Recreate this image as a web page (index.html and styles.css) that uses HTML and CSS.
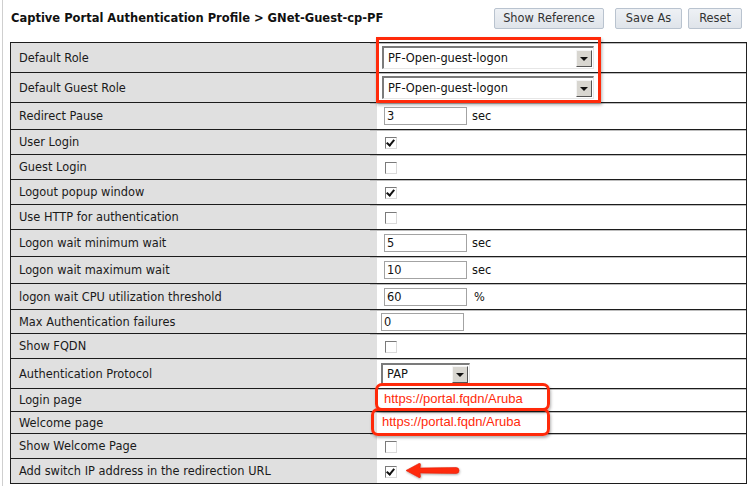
FILE: index.html
```html
<!DOCTYPE html>
<html>
<head>
<meta charset="utf-8">
<link rel="stylesheet" href="styles.css">
</head>
<body>
<div class="page">
  <div class="header">
    <div class="title">Captive Portal Authentication Profile &gt; GNet-Guest-cp-PF</div>
    <div class="buttons">
      <button class="btn btn-ref">Show Reference</button>
      <button class="btn btn-save">Save As</button>
      <button class="btn btn-reset">Reset</button>
    </div>
  </div>
  <div class="sheet">
    <table class="grid">
      <tr class="h30"><td class="lbl">Default Role</td><td class="val"><span class="sel wide"><span class="seltext">PF-Open-guest-logon</span><span class="arrow"></span></span></td></tr>
      <tr class="h30"><td class="lbl">Default Guest Role</td><td class="val"><span class="sel wide"><span class="seltext">PF-Open-guest-logon</span><span class="arrow"></span></span></td></tr>
      <tr class="h27"><td class="lbl">Redirect Pause</td><td class="val"><span class="inp">3</span><span class="unit">sec</span></td></tr>
      <tr class="h25"><td class="lbl">User Login</td><td class="val"><span class="chk on"></span></td></tr>
      <tr class="h25"><td class="lbl">Guest Login</td><td class="val"><span class="chk"></span></td></tr>
      <tr class="h25"><td class="lbl">Logout popup window</td><td class="val"><span class="chk on"></span></td></tr>
      <tr class="h25"><td class="lbl">Use HTTP for authentication</td><td class="val"><span class="chk"></span></td></tr>
      <tr class="h27"><td class="lbl">Logon wait minimum wait</td><td class="val"><span class="inp">5</span><span class="unit">sec</span></td></tr>
      <tr class="h27"><td class="lbl">Logon wait maximum wait</td><td class="val"><span class="inp">10</span><span class="unit">sec</span></td></tr>
      <tr class="h26"><td class="lbl">logon wait CPU utilization threshold</td><td class="val"><span class="inp">60</span><span class="unit pct">%</span></td></tr>
      <tr class="h24"><td class="lbl">Max Authentication failures</td><td class="val tight"><span class="inp">0</span></td></tr>
      <tr class="h25"><td class="lbl">Show FQDN</td><td class="val"><span class="chk"></span></td></tr>
      <tr class="h30"><td class="lbl">Authentication Protocol</td><td class="val tight"><span class="sel pap"><span class="seltext">PAP</span><span class="arrow"></span></span></td></tr>
      <tr class="h23"><td class="lbl">Login page</td><td class="val up3"><span class="url">https://portal.fqdn/Aruba</span></td></tr>
      <tr class="h22"><td class="lbl">Welcome page</td><td class="val up2"><span class="url url2">https://portal.fqdn/Aruba</span></td></tr>
      <tr class="h25"><td class="lbl">Show Welcome Page</td><td class="val"><span class="chk"></span></td></tr>
      <tr class="h25"><td class="lbl">Add switch IP address in the redirection URL</td><td class="val"><span class="chk on"></span></td></tr>
    </table>
    <div class="mark mark-roles"></div>
    <div class="mark-round mark-login"></div>
    <div class="mark-round mark-welcome"></div>
    <svg class="mark-arrow" width="60" height="22" viewBox="0 0 60 22">
      <defs>
        <filter id="sh" x="-20%" y="-40%" width="140%" height="180%">
          <feDropShadow dx="0.5" dy="1" stdDeviation="0.8" flood-color="#000" flood-opacity="0.35"/>
        </filter>
      </defs>
      <path d="M2 9.5 L15 2.5 Q16.5 2 16.5 3.5 L16 7 L52 6.5 Q55 6.5 55 9.5 Q55 12.5 52 12.5 L16 12 L16.5 15.5 Q16.5 17 15 16.5 Z" fill="#ff2a0a" stroke="#e0200a" stroke-width="0.6" stroke-linejoin="round" filter="url(#sh)"/>
    </svg>
  </div>
</div>
</body>
</html>
```
FILE: styles.css
```css
html, body {
  margin: 0;
  padding: 0;
  background: #fff;
}
body {
  font-family: "DejaVu Sans", Verdana, sans-serif;
  font-size: 11.4px;
  color: #111;
}
.page {
  margin-left: 2px;
  border-left: 1px solid #cfcfcf;
  height: 486px;
  padding-left: 7px;
  box-sizing: border-box;
}
.header {
  display: flex;
  align-items: center;
  justify-content: space-between;
  height: 36px;
  width: 737px;
  box-sizing: border-box;
}
.title {
  font-weight: bold;
  font-size: 11.5px;
  padding-left: 1px;
  color: #111;
}
.buttons {
  display: flex;
  padding-right: 5px;
}
.btn {
  font-family: "DejaVu Sans", Verdana, sans-serif;
  font-size: 11.4px;
  color: #333;
  height: 21px;
  padding: 0 8px;
  border: 1px solid #b9c3cf;
  border-radius: 2px;
  background: linear-gradient(#eef1f5, #dfe4ea);
}
.btn-save { margin-left: 11px; padding: 0 10px; }
.btn-reset { margin-left: 6px; padding: 0 10px; }
.sheet {
  position: relative;
  margin-top: 6px;
}
.grid {
  border-collapse: collapse;
  width: 737px;
  border-left: 1px solid #222;
  border-right: 1px solid #222;
}
.grid td {
  padding: 0;
  border-top: 1px solid #1c1c1c;
  vertical-align: middle;
}
.grid tr:last-child td {
  border-bottom: 1px solid #1c1c1c;
}
.lbl {
  width: 351px;
  background: #e0e0e0;
  padding-left: 8px !important;
  color: #1a1a1a;
}
.val {
  background: #fff;
  box-shadow: inset 0 1px 0 #bdbdbd, inset 7px 0 0 #e0e0e0;
  padding-left: 14px !important;
}
.val.tight {
  padding-left: 11px !important;
}
.val.up3 { padding-bottom: 3px !important; }
.val.up2 { padding-bottom: 2px !important; }
.h30 { height: 30px; }
.h27 { height: 27px; }
.h26 { height: 26px; }
.h25 { height: 25px; }
.h24 { height: 24px; }
.h23 { height: 23px; }
.h22 { height: 22px; }

.inp {
  display: inline-block;
  vertical-align: middle;
  width: 79px;
  height: 16px;
  line-height: 16px;
  border: 1px solid #a3a3a3;
  padding-left: 2px;
  box-sizing: content-box;
  background: #fff;
}
.unit {
  display: inline-block;
  vertical-align: middle;
  margin-left: 5px;
}
.unit.pct { margin-left: 7px; }
.chk {
  display: inline-block;
  vertical-align: middle;
  width: 10px;
  height: 10px;
  border-top: 1px solid #7a7a7a;
  border-left: 1px solid #7a7a7a;
  border-right: 1px solid #dadada;
  border-bottom: 1px solid #dadada;
  position: relative;
  margin-left: 1px;
}
.chk.on::after {
  content: "";
  position: absolute;
  left: 2px;
  top: 0;
  width: 3px;
  height: 6px;
  border-right: 2px solid #111;
  border-bottom: 2px solid #111;
  transform: rotate(40deg);
  transform-origin: center;
}
.sel {
  display: inline-flex;
  align-items: center;
  vertical-align: middle;
  border-top: 2px solid #7b7b7b;
  border-left: 2px solid #7b7b7b;
  border-right: 1px solid #e6e6e6;
  border-bottom: 1px solid #e6e6e6;
  background: #fff;
  box-sizing: border-box;
  justify-content: space-between;
}
.sel.wide {
  width: 212px;
  height: 23px;
  margin-left: -2px;
}
.sel.pap {
  width: 89px;
  height: 22px;
}
.seltext {
  padding-left: 4px;
}
.arrow {
  width: 16px;
  height: 17px;
  margin-right: 1px;
  background: #d8d6d0;
  border-top: 1px solid #f4f4f4;
  border-left: 1px solid #f4f4f4;
  border-right: 1px solid #555;
  border-bottom: 1px solid #555;
  box-sizing: border-box;
  position: relative;
}
.arrow::after {
  content: "";
  position: absolute;
  left: 3px;
  top: 6px;
  border-left: 4px solid transparent;
  border-right: 4px solid transparent;
  border-top: 4px solid #111;
}
.url {
  font-family: "Liberation Sans", Arial, sans-serif;
  font-size: 13px;
  color: #ff2a0a;
  margin-left: 0;
}
.url.url2 { margin-left: -2px; }

.mark {
  position: absolute;
  left: 366px;
  top: -5px;
  width: 225px;
  height: 66px;
  border: 3px solid #ff2a0a;
  box-sizing: border-box;
  box-shadow: 1px 2px 3px rgba(0,0,0,0.3);
}
.mark-round {
  position: absolute;
  border: 3px solid #ff2a0a;
  border-radius: 7px;
  box-sizing: border-box;
  box-shadow: 1px 2px 3px rgba(0,0,0,0.3);
}
.mark-login {
  left: 365px;
  top: 341px;
  width: 175px;
  height: 28px;
}
.mark-welcome {
  left: 361px;
  top: 366px;
  width: 179px;
  height: 28px;
}
.mark-arrow {
  position: absolute;
  left: 394px;
  top: 419px;
}
```
